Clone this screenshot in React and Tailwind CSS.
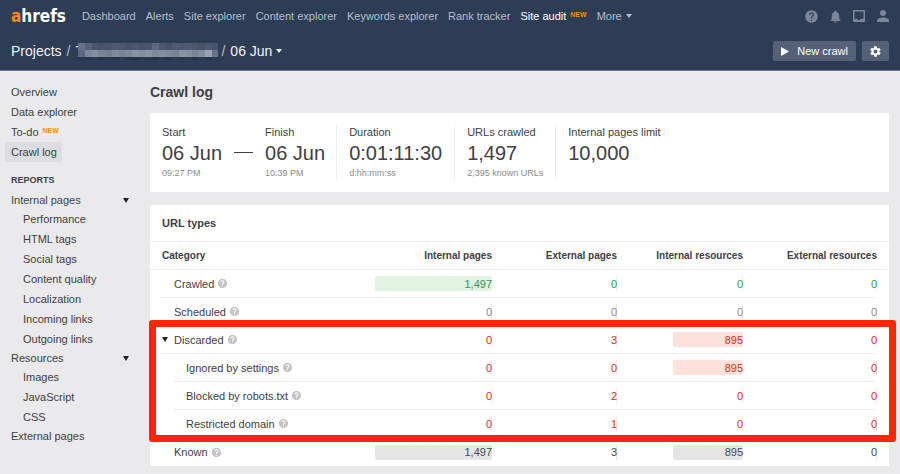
import React from "react";
import { MdHelp, MdNotifications, MdSettings } from "react-icons/md";

const mosaic = [
  ["#67728a", "#56617a", "#4a566e", "#465369", "#4a566d", "#505b72", "#4c5870", "#465369", "#4b576e", "#46536b", "#4a566d", "#5d6880", "#4c5870", "#465369", "#505b72", "#4c5870", "#505b72", "#4b576e", "#465369", "#4c5870", "#465369"],
  ["#5d6880", "#7d8799", "#858e9f", "#7a8496", "#747f92", "#7f899a", "#7a8496", "#7f899a", "#8a93a3", "#848d9e", "#8a93a3", "#7f899a", "#858e9f", "#7f899a", "#7a8496", "#8a93a3", "#858e9f", "#7a8496", "#848d9e", "#9aa2b0", "#66718a"],
  ["#2a3850", "#26344d", "#2a3850", "#26344d", "#293750", "#24324b", "#2b3952", "#26344d", "#24324b", "#293750", "#26344d", "#24324b", "#293750", "#26344d", "#2b3952", "#26344d", "#2b3952", "#26344d", "#2a3850", "#24324b", "#2c3a53"],
];

const TONES = {
  green: { text: "text-[#35973f]", bar: "bg-[#e1f2e2]" },
  gray: { text: "text-[#8c8c8c]", bar: "bg-[#e9e9e9]" },
  red: { text: "text-[#e02d26]", bar: "bg-[#ffe1dc]" },
  dark: { text: "text-[#4a4a4a]", bar: "bg-[#e5e5e5]" },
};

const rows = [
  { name: "Crawled", values: [1497, 0, 0, 0], tone: "green" },
  { name: "Scheduled", values: [0, 0, 0, 0], tone: "gray" },
  { name: "Discarded", values: [0, 3, 895, 0], tone: "red", open: true },
  { name: "Ignored by settings", values: [0, 0, 895, 0], tone: "red", child: true },
  { name: "Blocked by robots.txt", values: [0, 2, 0, 0], tone: "red", child: true },
  { name: "Restricted domain", values: [0, 1, 0, 0], tone: "red", child: true },
  { name: "Known", values: [1497, 3, 895, 0], tone: "dark", end: true },
];

const MAX = 1497;

function Caret({ className }) {
  return (
    <svg viewBox="0 0 6 5" preserveAspectRatio="none" className={className} fill="currentColor" aria-hidden="true">
      <path d="M0 0h6L3 5z" />
    </svg>
  );
}

function NewTag() {
  return <sup className="top-0 -mt-1 ml-1 text-[7px] leading-none font-bold text-[#ff8a00]">NEW</sup>;
}

function TopLink({ children, active }) {
  return (
    <a href="#" className={active ? "flex items-center text-white" : "flex items-center text-[#b9bfc9]"}>
      {children}
    </a>
  );
}

function Header() {
  return (
    <header className="border-b border-[#6d788a] bg-[#2e3d56] px-[11px]">
      <div className="flex h-8 items-center justify-between">
        <div className="flex items-center">
          <a
            href="#"
            className="mr-4 font-['DejaVu_Sans_Condensed','DejaVu_Sans',sans-serif] text-[17px] leading-5 font-bold text-white"
          >
            <span className="text-[#ff8a00]">a</span>hrefs
          </a>
          <nav className="flex items-center gap-[10px] whitespace-nowrap">
            <TopLink>Dashboard</TopLink>
            <TopLink>Alerts</TopLink>
            <TopLink>Site explorer</TopLink>
            <TopLink>Content explorer</TopLink>
            <TopLink>Keywords explorer</TopLink>
            <TopLink>Rank tracker</TopLink>
            <TopLink active>
              Site audit
              <NewTag />
            </TopLink>
            <TopLink>
              More
              <Caret className="ml-1 h-1 w-[6px]" />
            </TopLink>
          </nav>
        </div>
        <div className="flex items-center text-[#7c8698]">
          <button aria-label="Help" className="flex w-6 justify-center">
            <MdHelp size={15} />
          </button>
          <button aria-label="Notifications" className="flex w-6 justify-center">
            <MdNotifications size={15} />
          </button>
          <button aria-label="Inbox" className="flex w-6 justify-center">
            <svg viewBox="0 0 12 12" className="size-3" aria-hidden="true">
              <path fill="currentColor" fillRule="evenodd" d="M1 0h10a1 1 0 0 1 1 1v10a1 1 0 0 1-1 1H1a1 1 0 0 1-1-1V1a1 1 0 0 1 1-1zM1.500 1.500v7.200h2.700l.9 1.300h1.800l.9-1.300h2.700v-7.200z" />
            </svg>
          </button>
          <button aria-label="Account" className="flex w-[18px] justify-end">
            <svg viewBox="0 0 12 12" className="size-3" fill="currentColor" aria-hidden="true">
              <circle cx="6" cy="3" r="3" />
              <path d="M0 12v-1.600C0 8.400 3.500 7.400 6 7.400s6 1 6 3V12z" />
            </svg>
          </button>
        </div>
      </div>
      <div className="flex h-[38px] items-center justify-between">
        <div className="flex items-center gap-[5px] text-[14px] leading-5 text-[#f1f2f4]">
          <a href="#">Projects</a>
          <span className="text-[#b9bfc9]">/</span>
          <span className="relative block h-[17px] w-[143px] overflow-hidden leading-[17px]">
            T
            <span className="absolute inset-y-0 right-0 left-[3px] grid grid-rows-[7px_7px_3px]">
              {mosaic.map((line, i) => (
                <span key={i} className="flex">
                  {line.map((c, j) => (
                    <span key={j} className="flex-1" style={{ backgroundColor: c }} />
                  ))}
                </span>
              ))}
            </span>
          </span>
          <span className="-ml-[2px] text-[#b9bfc9]">/</span>
          <button className="flex items-center">
            06 Jun
            <Caret className="ml-1 h-1 w-[6px]" />
          </button>
        </div>
        <div className="flex gap-[6px] text-white">
          <button className="flex h-5 items-center gap-2 rounded-[2px] bg-[#566177] px-2">
            <svg viewBox="0 0 8 9" className="h-[9px] w-2" fill="currentColor" aria-hidden="true">
              <path d="M0 0l8 4.500L0 9z" />
            </svg>
            New crawl
          </button>
          <button aria-label="Settings" className="flex h-5 w-[27px] items-center justify-center rounded-[2px] bg-[#566177]">
            <MdSettings size={13} />
          </button>
        </div>
      </div>
    </header>
  );
}

function GroupLink({ children, open }) {
  return (
    <a href="#" className="flex h-[18px] items-center justify-between pr-[21px] pl-[11px]">
      {children}
      {open && <Caret className="h-[5px] w-[6px] text-[#222]" />}
    </a>
  );
}

function SubLink({ children }) {
  return <a href="#" className="flex h-5 items-center pl-[23px]">{children}</a>;
}

function Sidebar() {
  return (
    <nav className="w-[150px] shrink-0 pt-[11px]">
      <a href="#" className="flex h-5 items-center pl-[11px]">Overview</a>
      <a href="#" className="flex h-5 items-center pl-[11px]">Data explorer</a>
      <a href="#" className="flex h-5 items-center pl-[11px]">
        To-do
        <NewTag />
      </a>
      <a href="#" className="ml-[5px] flex h-5 w-[57px] items-center rounded-[2px] bg-[#dcdde0] pl-[6px]">Crawl log</a>
      <h2 className="mt-2 flex h-5 items-center pl-[11px] text-[9px] font-bold">REPORTS</h2>
      <div className="pt-px">
        <GroupLink open>Internal pages</GroupLink>
        <SubLink>Performance</SubLink>
        <SubLink>HTML tags</SubLink>
        <SubLink>Social tags</SubLink>
        <SubLink>Content quality</SubLink>
        <SubLink>Localization</SubLink>
        <SubLink>Incoming links</SubLink>
        <SubLink>Outgoing links</SubLink>
        <GroupLink open>Resources</GroupLink>
        <SubLink>Images</SubLink>
        <SubLink>JavaScript</SubLink>
        <SubLink>CSS</SubLink>
        <GroupLink>External pages</GroupLink>
      </div>
    </nav>
  );
}

function Stat({ label, value, note }) {
  return (
    <div className="whitespace-nowrap">
      <div className="leading-[14px]">{label}</div>
      <div className="text-[20px] leading-7">{value}</div>
      <div className="text-[9px] leading-[13px] text-[#8c8c8c]">{note}</div>
    </div>
  );
}

function Summary() {
  return (
    <section className="flex bg-white py-3">
      <div className="flex items-center pr-[11px] pl-3">
        <Stat label="Start" value="06 Jun" note="09:27 PM" />
        <div className="mx-3 h-px w-[19px] bg-[#404040]" />
        <Stat label="Finish" value="06 Jun" note="10:39 PM" />
      </div>
      <div className="border-l border-[#ececec] px-3">
        <Stat label="Duration" value="0:01:11:30" note="d:hh:mm:ss" />
      </div>
      <div className="border-l border-[#ececec] px-3">
        <Stat label="URLs crawled" value="1,497" note="2,395 known URLs" />
      </div>
      <div className="border-l border-[#ececec] px-3">
        <Stat label="Internal pages limit" value="10,000" />
      </div>
    </section>
  );
}

function HelpDot() {
  return (
    <button aria-label="About this category" className="ml-[3px] text-[#c4c4c4]">
      <MdHelp size={11} />
    </button>
  );
}

function Row({ row }) {
  const tone = TONES[row.tone];
  const line = row.end ? "" : "border-b border-[#ededed]";
  return (
    <tr>
      <th scope="row" className="p-0 font-normal">
        <div className={`flex h-7 items-center pl-3 ${row.child ? "ml-6" : "ml-3"} ${line}`}>
          {row.open && (
            <button aria-label="Collapse" className="-ml-3 w-3">
              <Caret className="h-[5px] w-[6px] text-[#222]" />
            </button>
          )}
          {row.name}
          <HelpDot />
        </div>
      </th>
      {row.values.map((v, i) => (
        <td key={i} className="p-0">
          <div className={`flex h-7 items-center justify-end ${i === 3 ? "mr-3" : ""} ${line}`}>
            <div className="flex w-[117px] justify-end">
              <div
                className={`flex h-[15px] min-w-px items-center justify-end rounded-[2px] ${tone.bar} ${tone.text}`}
                style={{ width: `${(v / MAX) * 100}%` }}
              >
                {v.toLocaleString("en-US")}
              </div>
            </div>
          </div>
        </td>
      ))}
    </tr>
  );
}

function UrlTypes() {
  return (
    <section className="relative mt-[13px] bg-white">
      <h2 className="flex h-[37px] items-center border-b border-[#ededed] pl-3 font-bold">URL types</h2>
      <table className="w-full table-fixed border-separate border-spacing-0 whitespace-nowrap">
        <thead>
          <tr className="h-7 text-right text-[10px] font-bold">
            <th scope="col" className="border-b border-[#ededed] p-0 pl-3 text-left">Category</th>
            <th scope="col" className="w-[125px] border-b border-[#ededed] p-0">Internal pages</th>
            <th scope="col" className="w-[125px] border-b border-[#ededed] p-0">External pages</th>
            <th scope="col" className="w-[126px] border-b border-[#ededed] p-0">Internal resources</th>
            <th scope="col" className="w-[146px] border-b border-[#ededed] p-0 pr-3">External resources</th>
          </tr>
        </thead>
        <tbody>
          {rows.map((r) => (
            <Row key={r.name} row={r} />
          ))}
        </tbody>
      </table>
      <div className="pointer-events-none absolute top-[115px] -right-[7px] -left-px h-[122px] rounded-[3px] border-[7px] border-[#ff2600]" />
    </section>
  );
}

export default function App() {
  return (
    <div className="min-h-screen bg-[#eaeaec] font-['Liberation_Sans',Arial,sans-serif] text-[11px] leading-4 text-[#404040]">
      <Header />
      <div className="flex">
        <Sidebar />
        <main className="min-w-0 flex-1 pr-[11px] pb-2">
          <h1 className="flex h-[42px] items-center text-[14px] font-bold">Crawl log</h1>
          <Summary />
          <UrlTypes />
        </main>
      </div>
    </div>
  );
}
